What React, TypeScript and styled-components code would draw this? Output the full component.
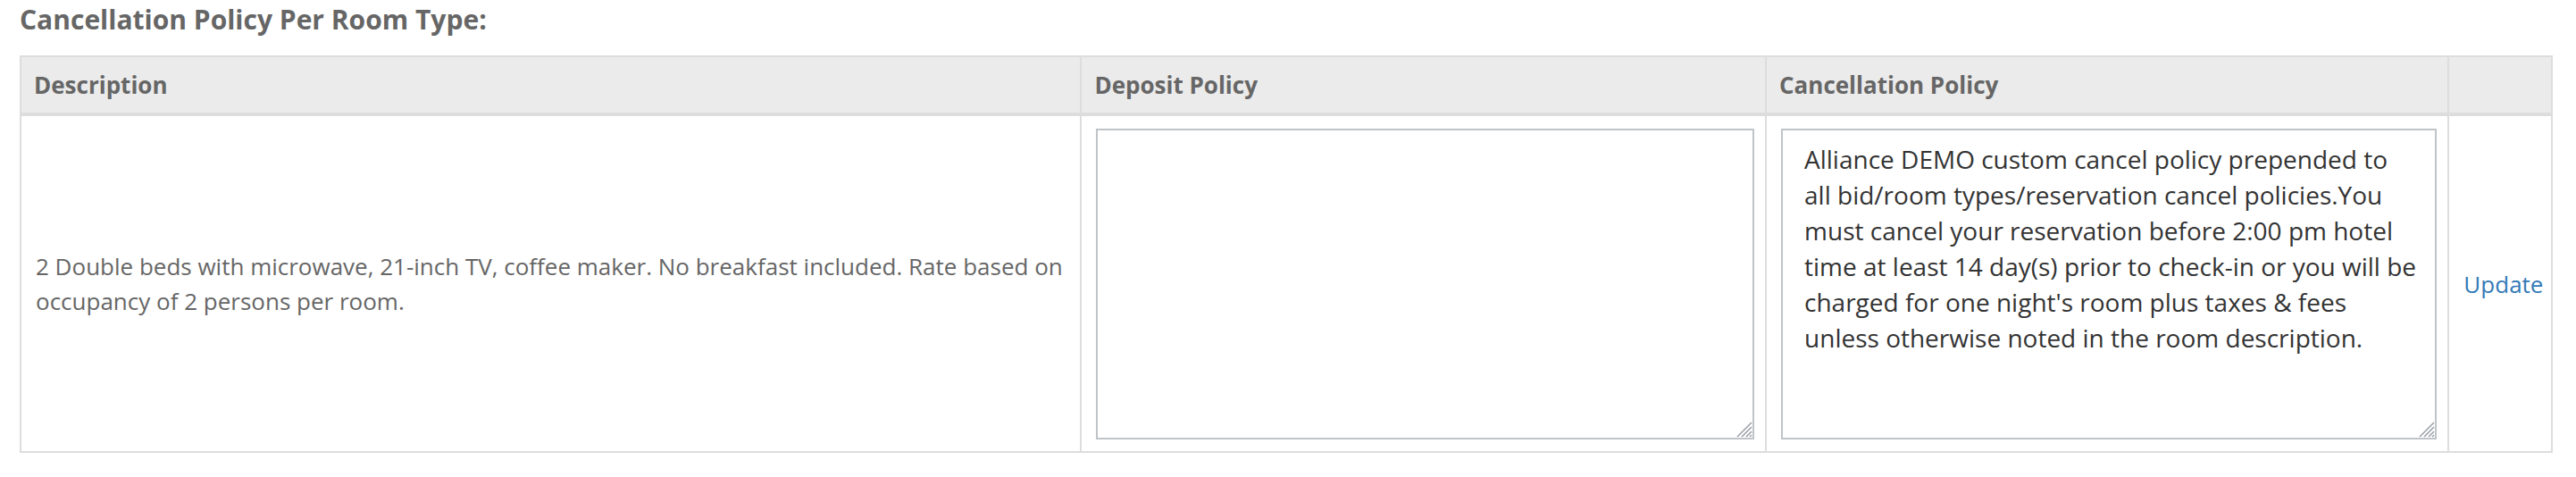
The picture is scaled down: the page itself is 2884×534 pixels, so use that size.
import React from "react";
import styled, { createGlobalStyle } from "styled-components";

const GlobalStyle = createGlobalStyle`
  html, body { margin: 0; padding: 0; background: #fff; }
  body { font-family: "Open Sans", "Liberation Sans", sans-serif; color: #333; }
  *, *::before, *::after { box-sizing: border-box; }
`;

const Page = styled.div`
  padding: 2px 26px 0 22px;
`;

const Title = styled.h3`
  margin: 0 0 20px 0;
  font-size: 30px;
  line-height: 40px;
  font-weight: 700;
  color: #666;
`;

const Table = styled.table`
  width: 100%;
  border-collapse: collapse;
  border: 2px solid #ddd;
  table-layout: fixed;
`;

const HeadCell = styled.th<{ $w?: string }>`
  ${(p) => (p.$w ? `width: ${p.$w};` : "")}
  background: #ebebeb;
  color: #666;
  font-size: 26px;
  font-weight: 700;
  text-align: left;
  padding: 14px;
  line-height: 34px;
  border: 2px solid #ddd;
  border-bottom: 4px solid #ddd;
`;

const Cell = styled.td<{ $align?: string }>`
  border: 2px solid #ddd;
  padding: 14px 12px 13px 16px;
  vertical-align: middle;
  text-align: ${(p) => p.$align || "left"};
  font-size: 26px;
  line-height: 39px;
  color: #666;
`;

const AreaWrap = styled.div`
  position: relative;
`;

const Area = styled.textarea`
  display: block;
  width: 100%;
  height: 348px;
  margin: 0;
  padding: 12px 18px 12px 24px;
  border: 2px solid #bfc4c8;
  border-radius: 0;
  font-family: "Open Sans", "Liberation Sans", sans-serif;
  font-size: 28px;
  line-height: 40px;
  color: #333;
  resize: none;
  outline: none;
  background: #fff;
`;

const Grip = styled.svg`
  position: absolute;
  right: 2px;
  bottom: 2px;
  width: 20px;
  height: 20px;
  pointer-events: none;
`;

const UpdateLink = styled.a`
  color: #337ab7;
  text-decoration: none;
  font-size: 26px;
  cursor: pointer;
`;

function ResizeGrip() {
  return (
    <Grip viewBox="0 0 20 20">
      <g stroke="#9aa0a6" strokeWidth="1.6">
        <line x1="19" y1="3" x2="3" y2="19" />
        <line x1="19" y1="8" x2="8" y2="19" />
        <line x1="19" y1="13" x2="13" y2="19" />
        <line x1="19" y1="17" x2="17" y2="19" />
      </g>
    </Grip>
  );
}

const cancelText =
  "Alliance DEMO custom cancel policy prepended to all bid/room types/reservation cancel policies.You must cancel your reservation before 2:00 pm hotel time at least 14 day(s) prior to check-in or you will be charged for one night's room plus taxes & fees unless otherwise noted in the room description.";

export default function App() {
  return (
    <Page>
      <GlobalStyle />
      <Title>Cancellation Policy Per Room Type:</Title>
      <Table>
        <thead>
          <tr>
            <HeadCell $w="41.9%">Description</HeadCell>
            <HeadCell $w="27.05%">Deposit Policy</HeadCell>
            <HeadCell $w="26.97%">Cancellation Policy</HeadCell>
            <HeadCell />
          </tr>
        </thead>
        <tbody>
          <tr>
            <Cell>
              2 Double beds with microwave, 21-inch TV, coffee maker. No breakfast included. Rate based on
              occupancy of 2 persons per room.
            </Cell>
            <Cell>
              <AreaWrap>
                <Area defaultValue="" />
                <ResizeGrip />
              </AreaWrap>
            </Cell>
            <Cell>
              <AreaWrap>
                <Area defaultValue={cancelText} />
                <ResizeGrip />
              </AreaWrap>
            </Cell>
            <Cell $align="center">
              <UpdateLink>Update</UpdateLink>
            </Cell>
          </tr>
        </tbody>
      </Table>
    </Page>
  );
}
